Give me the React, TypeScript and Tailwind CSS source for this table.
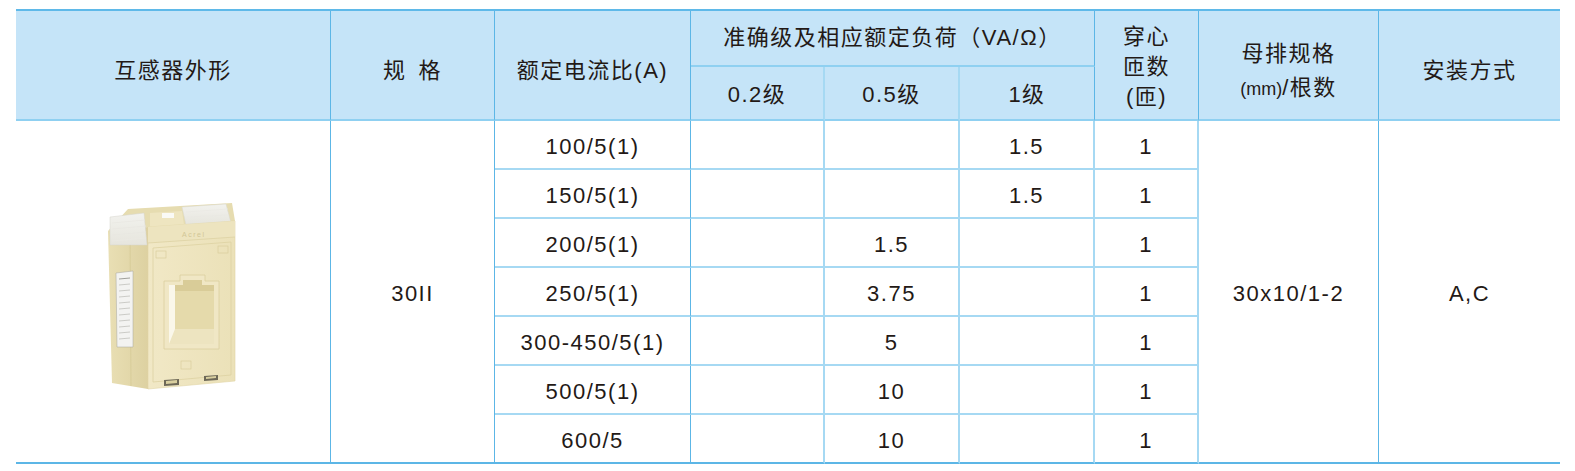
import React from "react";

const HEAD = "bg-[#c5e4f8] flex items-center justify-center text-center";
const DARK_R = "border-r border-r-[#5cb6e6]";
const LIGHT_R = "border-r-2 border-r-[#a6d9f3]";
const HEAD_B = "border-b-2 border-b-[#8fd0f1]";
const LIGHT_B = "border-b-2 border-b-[#a6d9f3]";
const DARK_B = "border-b-2 border-b-[#5cb6e6]";
const CELL = "flex items-center justify-center text-center pt-1";

function Transformer() {
  return (
    <svg width="140" height="190" viewBox="0 0 140 190">
      <defs>
        <linearGradient id="sideG" x1="0" x2="1" y1="0" y2="0">
          <stop offset="0" stopColor="#e9dfb4" />
          <stop offset="1" stopColor="#ddd1a1" />
        </linearGradient>
        <linearGradient id="frontG" x1="0" x2="1" y1="0" y2="0">
          <stop offset="0" stopColor="#f1e8c6" />
          <stop offset="1" stopColor="#ebe1b8" />
        </linearGradient>
        <linearGradient id="coverG" x1="0" x2="0" y1="0" y2="1">
          <stop offset="0" stopColor="#f2f2ee" />
          <stop offset="1" stopColor="#e6e5dd" />
        </linearGradient>
      </defs>
      {/* top face */}
      <polygon points="8,30 28,8 132,2 135,20 48,26" fill="#e6dcb0" />
      {/* right clear cover */}
      <polygon points="82,6 126,3 131,22 86,24" fill="url(#coverG)" stroke="#d9d8d0" strokeWidth="0.5" />
      <line x1="86" y1="11" x2="128" y2="8" stroke="#e9e8e2" strokeWidth="0.6" />
      <line x1="87" y1="16" x2="129" y2="14" stroke="#e9e8e2" strokeWidth="0.6" />
      {/* middle piece */}
      <polygon points="50,12 82,10 84,24 50,27" fill="#eee5c0" />
      <rect x="62" y="12" width="12" height="5" fill="#fafaf6" />
      {/* side face */}
      <polygon points="8,30 48,26 48,188 12,182" fill="url(#sideG)" />
      <line x1="30" y1="29" x2="31" y2="185" stroke="#d6ca95" strokeWidth="0.8" />
      {/* label */}
      <polygon points="16,72 33,70 33,146 17,146" fill="#f3f3f1" stroke="#a4a49e" strokeWidth="0.5" />
      <line x1="19" y1="78" x2="30" y2="77" stroke="#8a8a84" strokeWidth="0.8" />
      <line x1="19" y1="84" x2="30" y2="83" stroke="#b0b0aa" strokeWidth="0.6" />
      <line x1="19" y1="90" x2="30" y2="89" stroke="#b0b0aa" strokeWidth="0.6" />
      <line x1="19" y1="96" x2="30" y2="95" stroke="#b0b0aa" strokeWidth="0.6" />
      <line x1="19" y1="102" x2="30" y2="101" stroke="#b0b0aa" strokeWidth="0.6" />
      <line x1="19" y1="108" x2="30" y2="107" stroke="#b0b0aa" strokeWidth="0.6" />
      <line x1="19" y1="114" x2="30" y2="113" stroke="#b0b0aa" strokeWidth="0.6" />
      <line x1="19" y1="120" x2="30" y2="119" stroke="#b0b0aa" strokeWidth="0.6" />
      <line x1="19" y1="126" x2="30" y2="125" stroke="#b0b0aa" strokeWidth="0.6" />
      <line x1="19" y1="132" x2="30" y2="131" stroke="#b0b0aa" strokeWidth="0.6" />
      <line x1="19" y1="138" x2="30" y2="137" stroke="#b0b0aa" strokeWidth="0.6" />
      {/* front face */}
      <polygon points="48,26 135,20 135,180 48,188" fill="url(#frontG)" stroke="#e0d5a6" strokeWidth="0.6" />
      <polygon points="48,26 135,20 135,36 48,42" fill="#ede4bf" />
      <line x1="48" y1="42" x2="135" y2="36" stroke="#ddd2a3" strokeWidth="0.8" />
      <text x="82" y="36" fontSize="7" fill="#d2c696" fontFamily="Liberation Sans, sans-serif">Acrel</text>
      {/* inner panel */}
      <polygon points="53,47 131,41 131,174 53,181" fill="none" stroke="#ddd2a2" strokeWidth="0.8" />
      <rect x="56" y="50" width="10" height="7" fill="none" stroke="#d6ca97" strokeWidth="0.6" />
      <rect x="118" y="45" width="10" height="7" fill="none" stroke="#d6ca97" strokeWidth="0.6" />
      {/* window frame */}
      <polygon points="64,80 80,80 80,74 105,74 105,80 119,80 119,148 64,148" fill="#f0e7c5" stroke="#dacf9e" strokeWidth="0.8" />
      <polygon points="69,84 83,84 83,79 102,79 102,84 114,84 114,143 69,143" fill="#e5daab" />
      <rect x="69" y="84" width="6" height="59" fill="#faf7ea" />
      <polygon points="75,84 83,84 83,79 102,79 102,84 114,84 114,90 75,90" fill="#d9cc98" />
      <polygon points="75,128 114,128 114,143 69,143" fill="#ede4c0" />
      {/* bottom marks */}
      <rect x="81" y="160" width="10" height="8" fill="none" stroke="#d6ca97" strokeWidth="0.6" />
      <polygon points="64,179 79,178 79,184 64,185" fill="#6d6857" />
      <polygon points="66,180 77,179 77,182 66,183" fill="#d9cf9f" />
      <polygon points="104,175 118,174 118,179 104,180" fill="#6d6857" />
      <polygon points="106,176 116,175 116,177 106,178" fill="#d9cf9f" />
      {/* left clear cover */}
      <polygon points="10,16 44,12 47,44 10,44" fill="url(#coverG)" stroke="#d6d5cd" strokeWidth="0.5" />
      <line x1="12" y1="22" x2="45" y2="19" stroke="#e8e7e1" strokeWidth="0.7" />
      <line x1="12" y1="28" x2="46" y2="25" stroke="#e8e7e1" strokeWidth="0.7" />
      <line x1="12" y1="34" x2="46" y2="31" stroke="#e8e7e1" strokeWidth="0.7" />
      <line x1="12" y1="40" x2="46" y2="37" stroke="#ebeae4" strokeWidth="0.7" />
    </svg>
  );
}

const rows: string[][] = [
  ["100/5(1)", "", "", "1.5", "1"],
  ["150/5(1)", "", "", "1.5", "1"],
  ["200/5(1)", "", "1.5", "", "1"],
  ["250/5(1)", "", "3.75", "", "1"],
  ["300-450/5(1)", "", "5", "", "1"],
  ["500/5(1)", "", "10", "", "1"],
  ["600/5", "", "10", "", "1"],
];

export default function App() {
  return (
    <div className="bg-white w-[1575px] h-[471px] pt-[9px] pl-4 font-['Liberation_Sans','Noto_Sans_CJK_SC',sans-serif] text-[22px] tracking-[1.5px] text-[#231916] leading-none">
      <div className="grid w-[1544px] grid-cols-[315px_164px_196px_134px_135px_135px_104px_180px_181px] grid-rows-[56px_54px_repeat(7,49px)] border-t-2 border-t-[#5fb9e9]">
        {/* header row 1 */}
        <div className={`${HEAD} ${DARK_R} ${HEAD_B} row-span-2 pt-3`}>互感器外形</div>
        <div className={`${HEAD} ${DARK_R} ${HEAD_B} row-span-2 pt-3`}>
          规<span className="ml-[12px]">格</span>
        </div>
        <div className={`${HEAD} ${DARK_R} ${HEAD_B} row-span-2 pt-3`}>额定电流比(A)</div>
        <div className={`${HEAD} ${DARK_R} ${HEAD_B} col-span-3`}>准确级及相应额定负荷（VA/Ω）</div>
        <div className={`${HEAD} ${DARK_R} ${HEAD_B} row-span-2 pt-1 flex-col leading-[30px]`}>
          <span>穿心</span>
          <span>匝数</span>
          <span>(匝)</span>
        </div>
        <div className={`${HEAD} ${DARK_R} ${HEAD_B} row-span-2 pt-3 flex-col leading-[34px]`}>
          <span>母排规格</span>
          <span>
            <span className="text-[18px] tracking-[0px]">(mm)</span>/根数
          </span>
        </div>
        <div className={`${HEAD} ${HEAD_B} row-span-2 pt-3`}>安装方式</div>
        {/* header row 2 */}
        <div className={`${HEAD} ${LIGHT_R} ${HEAD_B} pt-1`}>0.2级</div>
        <div className={`${HEAD} ${LIGHT_R} ${HEAD_B} pt-1`}>0.5级</div>
        <div className={`${HEAD} ${DARK_R} ${HEAD_B} pt-1`}>1级</div>

        {/* spanning body cells */}
        <div className={`col-start-1 row-start-3 row-span-7 flex items-center justify-center ${DARK_R} ${DARK_B}`}>
          <div className="mt-[8px] ml-[-6px]">
            <Transformer />
          </div>
        </div>
        <div className={`col-start-2 row-start-3 row-span-7 ${CELL} ${DARK_R} ${DARK_B}`}>30II</div>
        <div className={`col-start-8 row-start-3 row-span-7 ${CELL} ${DARK_R} ${DARK_B}`}>30x10/1-2</div>
        <div className={`col-start-9 row-start-3 row-span-7 ${CELL} ${DARK_B}`}>A,C</div>

        {rows.map((r, i) => {
          const last = i === rows.length - 1;
          const b = last ? DARK_B : LIGHT_B;
          return (
            <React.Fragment key={i}>
              <div className={`${CELL} ${DARK_R} ${b}`}>{r[0]}</div>
              <div className={`${CELL} ${LIGHT_R} ${b}`}>{r[1]}</div>
              <div className={`${CELL} ${LIGHT_R} ${b}`}>{r[2]}</div>
              <div className={`${CELL} ${LIGHT_R} ${b}`}>{r[3]}</div>
              <div className={`${CELL} ${LIGHT_R} ${b}`}>{r[4]}</div>
            </React.Fragment>
          );
        })}
      </div>
    </div>
  );
}
